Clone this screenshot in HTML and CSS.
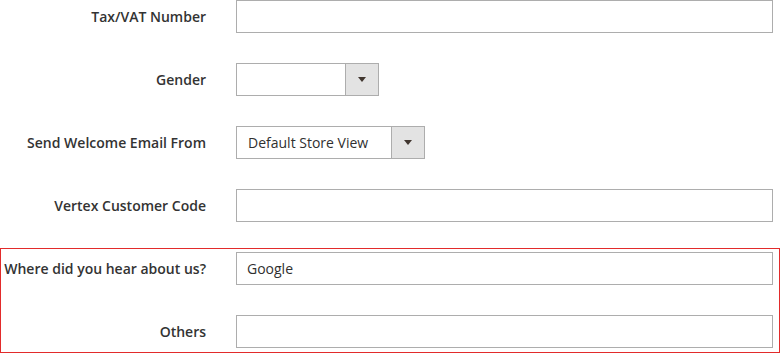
FILE: index.html
```html
<!DOCTYPE html>
<html lang="en">
  <head>
    <meta charset="UTF-8" />
    <meta name="viewport" content="width=device-width, initial-scale=1.0" />
    <title>Customer Information</title>
    <link rel="stylesheet" href="styles.css">
  </head>
  <body>
    <form class="customer-form">
      <div class="field">
        <label for="taxvat">Tax/VAT Number</label>
        <input type="text" id="taxvat" name="taxvat" />
      </div>

      <div class="field">
        <label>Gender</label>
        <div class="select select-gender">
          <span class="select-value"></span>
          <span class="select-toggle"><span class="arrow"></span></span>
        </div>
      </div>

      <div class="field">
        <label>Send Welcome Email From</label>
        <div class="select select-store">
          <span class="select-value">Default Store View</span>
          <span class="select-toggle"><span class="arrow"></span></span>
        </div>
      </div>

      <div class="field">
        <label for="vertex_code">Vertex Customer Code</label>
        <input type="text" id="vertex_code" name="vertex_code" />
      </div>

      <div class="highlight">
        <div class="field">
          <label for="hear_about">Where did you hear about us?</label>
          <input type="text" id="hear_about" name="hear_about" value="Google" />
        </div>

        <div class="field">
          <label for="others">Others</label>
          <input type="text" id="others" name="others" />
        </div>
      </div>
    </form>
  </body>
</html>
```

FILE: styles.css
```css
body {
  font-family: "Open Sans", "Liberation Sans", sans-serif;
  font-size: 14px;
  color: #303030;
  margin: 0;
  background: #fff;
}
.customer-form {
  width: 780px;
}
.field {
  display: grid;
  grid-template-columns: 206px 537px;
  column-gap: 30px;
  align-items: center;
  margin-bottom: 30px;
}
.field label {
  text-align: right;
  font-weight: 600;
  color: #333;
}
input {
  height: 33px;
  width: 100%;
  padding: 0 10px;
  border: 1px solid #adadad;
  box-sizing: border-box;
  font-family: inherit;
  font-size: 14px;
  color: #303030;
  outline: none;
}
.select {
  display: flex;
  height: 33px;
  border: 1px solid #adadad;
  box-sizing: border-box;
  background: #fff;
}
.select-gender {
  width: 143px;
}
.select-store {
  width: 189px;
}
.select-value {
  flex: 1;
  display: flex;
  align-items: center;
  padding: 0 11px;
}
.select-toggle {
  width: 32px;
  border-left: 1px solid #adadad;
  background: #e3e3e3;
  display: flex;
  align-items: center;
  justify-content: center;
}
.arrow {
  width: 0;
  height: 0;
  border-left: 4px solid transparent;
  border-right: 4px solid transparent;
  border-top: 5px solid #41362f;
}
.highlight {
  border: 1px solid #e22b2b;
  margin-top: -4px;
  padding: 3px 0 4px;
}
.highlight .field {
  margin-left: -1px;
}
.highlight .field:last-child {
  margin-bottom: 0;
}
```
